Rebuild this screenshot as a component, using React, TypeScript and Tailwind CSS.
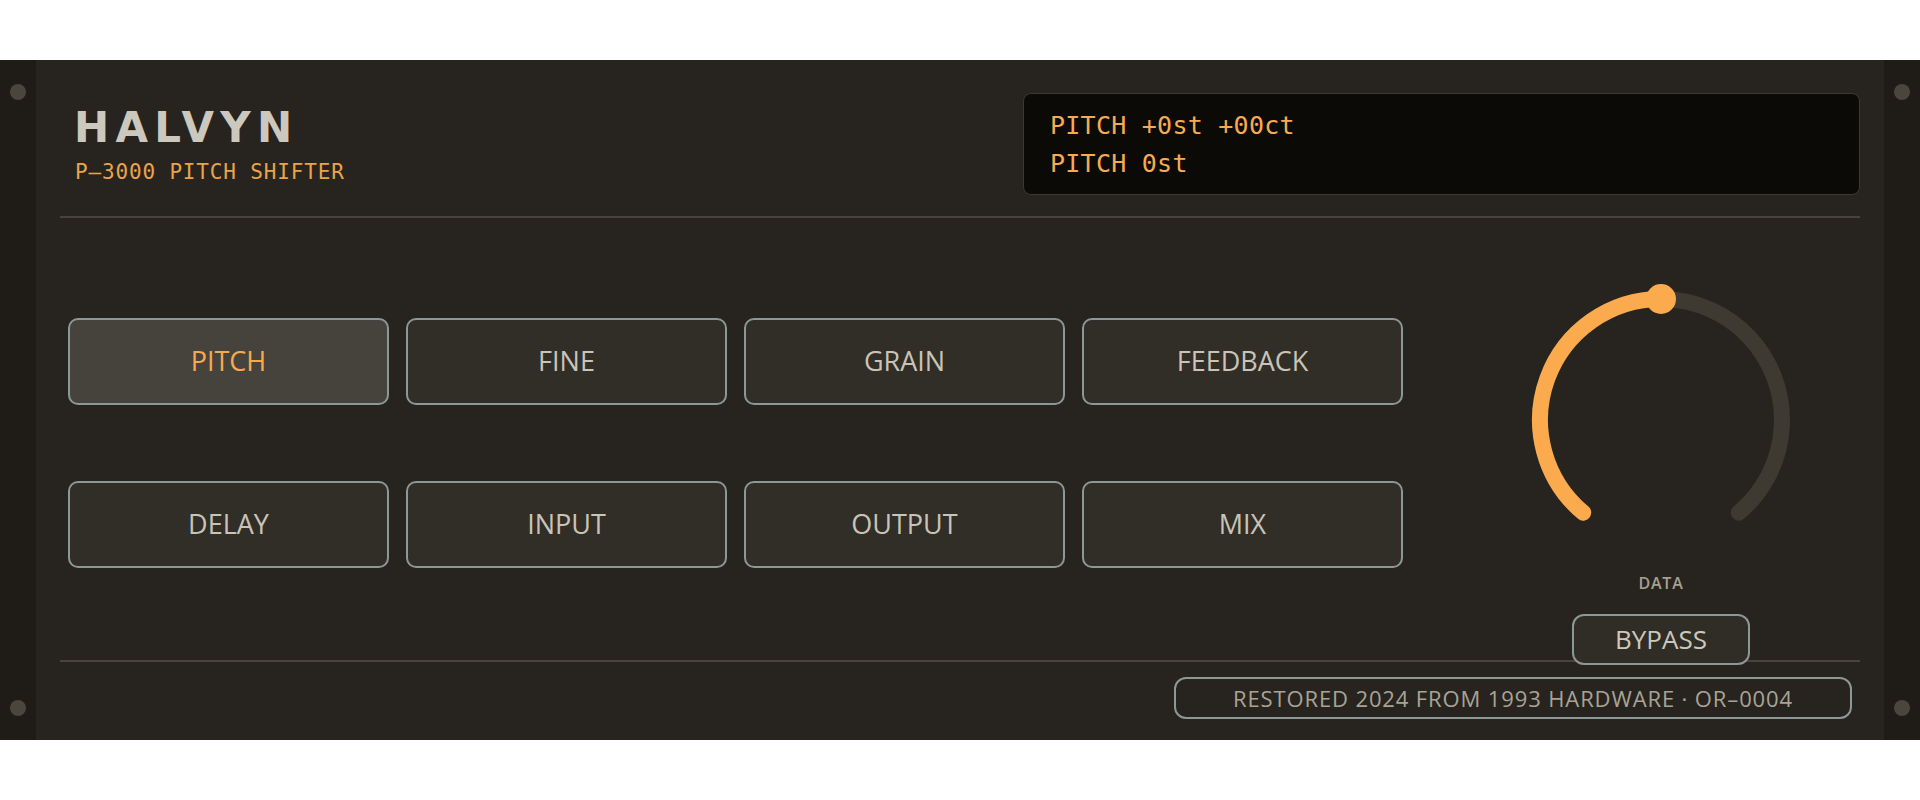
import React from "react";

const SANS = "font-['Open_Sans','Noto_Sans',sans-serif]";
const MONO = "font-['DejaVu_Sans_Mono','Liberation_Mono',monospace]";

const PARAMS = [
  "PITCH",
  "FINE",
  "GRAIN",
  "FEEDBACK",
  "DELAY",
  "INPUT",
  "OUTPUT",
  "MIX",
];

function Screw() {
  return <div className="h-4 w-4 rounded-full bg-[#4a463e]" />;
}

function Ear() {
  return (
    <div className="flex w-[36px] shrink-0 flex-col items-center justify-between bg-[#1f1c18] py-6">
      <Screw />
      <Screw />
    </div>
  );
}

// point on the knob ring, angle in degrees clockwise from 12 o'clock
function polar(cx: number, cy: number, r: number, deg: number) {
  const a = (deg * Math.PI) / 180;
  return { x: cx + r * Math.sin(a), y: cy - r * Math.cos(a) };
}

function Knob({ value }: { value: number }) {
  const cx = 140;
  const cy = 140;
  const r = 121;
  const min = -140;
  const max = 140;
  const angle = min + (max - min) * value;
  const s = polar(cx, cy, r, min);
  const e = polar(cx, cy, r, max);
  const v = polar(cx, cy, r, angle);
  const large = angle - min > 180 ? 1 : 0;
  return (
    <svg width="280" height="280" viewBox="0 0 280 280">
      <path
        d={`M ${s.x} ${s.y} A ${r} ${r} 0 1 1 ${e.x} ${e.y}`}
        fill="none"
        stroke="#3e3a31"
        strokeWidth="16"
        strokeLinecap="round"
      />
      <path
        d={`M ${s.x} ${s.y} A ${r} ${r} 0 ${large} 1 ${v.x} ${v.y}`}
        fill="none"
        stroke="#fbab4e"
        strokeWidth="16"
        strokeLinecap="round"
      />
      <circle cx={v.x} cy={v.y} r="15" fill="#fbab4e" />
    </svg>
  );
}

export default function App() {
  const active = "PITCH";
  return (
    <div className="h-[800px] w-full bg-white pt-[60px]">
      <div className="flex h-[680px] w-full bg-[#27241f]">
        <Ear />
        <div className="flex min-w-0 flex-1 flex-col px-6">
          {/* header: brand + LCD */}
          <header className="flex items-start justify-between border-b-2 border-[#48443b] pb-[21px] pl-[14px] pt-[33px]">
            <div className="mt-[14px] flex flex-col">
              <h1 className="font-['DejaVu_Sans',sans-serif] text-[42px] font-bold leading-none tracking-[0.15em] text-[#cdc8bd]">
                HALVYN
              </h1>
              <div className={`${MONO} mt-[13px] pl-[1px] text-[21px] leading-none tracking-[0.04em] text-[#e9a34b]`}>
                P–3000 PITCH SHIFTER
              </div>
            </div>
            <div className={`${MONO} h-[102px] w-[837px] rounded-lg border border-[#3d3930] bg-[#0c0a07] px-[26px] py-[13px] text-[25px] leading-[37.5px] tracking-[0.01em] text-[#f6ab50]`}>
              <div>PITCH +0st +00ct</div>
              <div>PITCH 0st</div>
            </div>
          </header>

          {/* parameter keys + data knob */}
          <main className="flex h-[444px] items-start border-b-2 border-[#48443b] px-2">
            <div className="mt-[100px] grid w-[1335px] grid-cols-4 gap-x-[17px] gap-y-[76px]">
              {PARAMS.map((p) => (
                <button
                  key={p}
                  className={`${SANS} flex h-[87px] items-center justify-center rounded-[10px] border-2 border-[#8c9797] text-[27px] font-medium ${
                    p === active
                      ? "bg-[#46433c] text-[#f7a94d]"
                      : "bg-[#312e27] text-[#c9c4b7]"
                  }`}
                >
                  {p}
                </button>
              ))}
            </div>
            <div className="ml-auto mt-[62px] flex w-[382px] flex-col items-center">
              <Knob value={0.5} />
              <div className={`${SANS} mt-[15px] text-[16px] font-semibold leading-none tracking-[0.05em] text-[#a6a093]`}>
                DATA
              </div>
              <button
                className={`${SANS} relative z-10 mt-[23px] flex h-[51px] w-[178px] items-center justify-center rounded-xl border-2 border-[#8c9797] bg-[#302d26] text-[26px] font-medium text-[#cdc8bb]`}
              >
                BYPASS
              </button>
            </div>
          </main>

          {/* provenance badge */}
          <footer className="flex justify-end px-2 pb-[21px] pt-[15px]">
            <div className={`${SANS} flex h-[42px] items-center rounded-xl border-2 border-[#8c9797] px-[57px] text-[22px] font-medium tracking-[0.04em] text-[#a9a396]`}>
              RESTORED 2024 FROM 1993 HARDWARE · OR–0004
            </div>
          </footer>
        </div>
        <Ear />
      </div>
    </div>
  );
}
